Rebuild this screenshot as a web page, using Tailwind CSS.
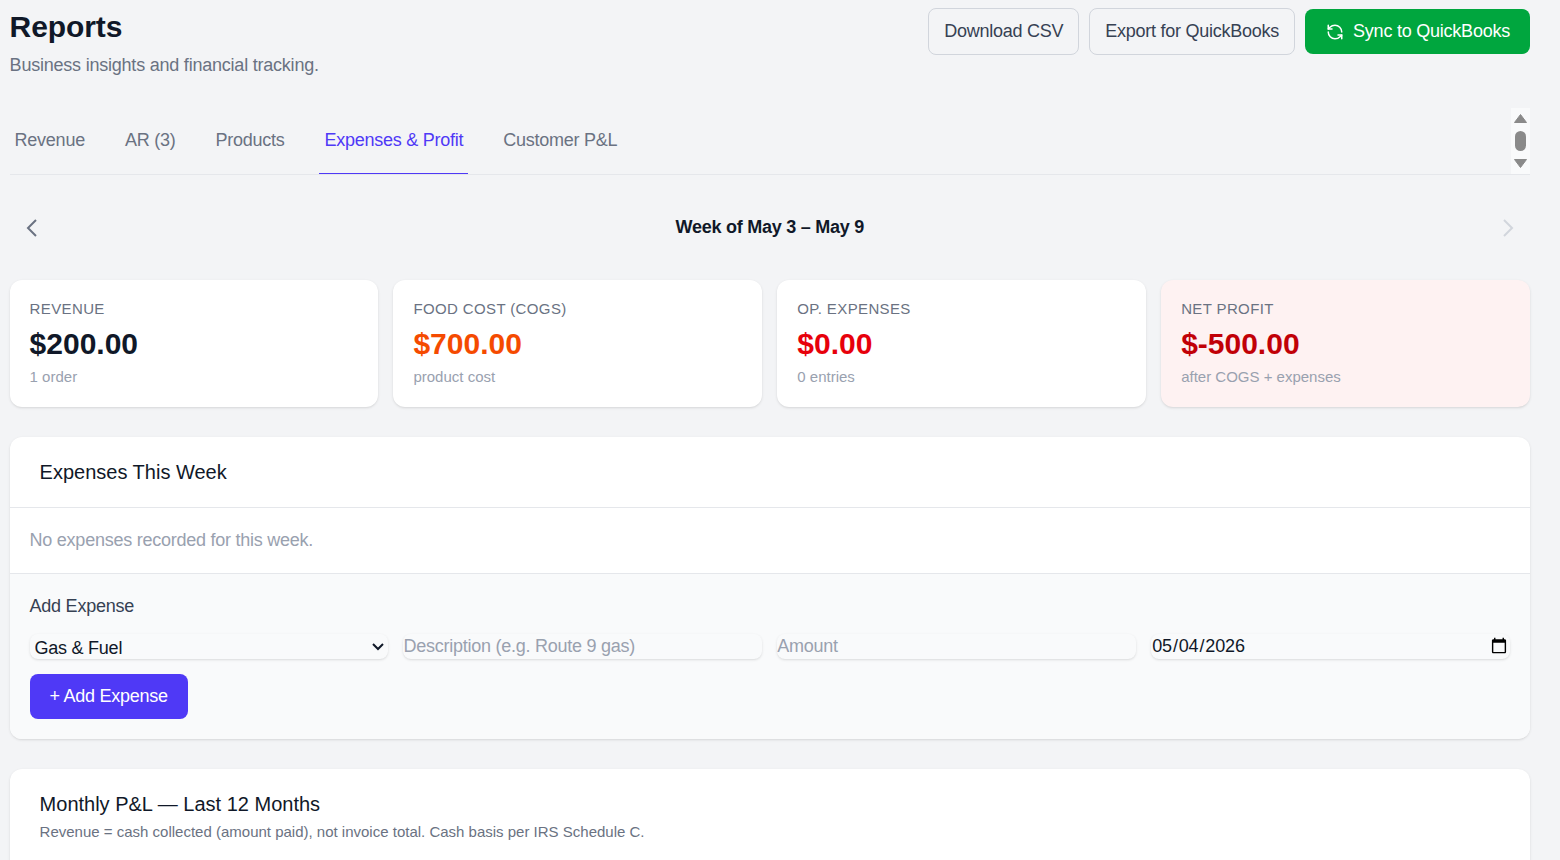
<!DOCTYPE html>
<html lang="en"><head><meta charset="utf-8"><title>Reports</title>
<script src="https://cdn.jsdelivr.net/npm/@tailwindcss/browser@4"></script></head>
<body class="bg-gray-100 overflow-hidden font-['Liberation_Sans',sans-serif]">
<div class="h-[860px] overflow-hidden pl-[9.6px] pr-[30px] pt-[8px]">
  <header class="flex justify-between h-[100px]">
    <div>
      <h1 class="text-[30px] leading-[38px] font-bold text-gray-900 tracking-[-0.1px]">Reports</h1>
      <p class="text-lg leading-[28px] mt-[5px] text-gray-500 tracking-[-0.22px]">Business insights and financial tracking.</p>
    </div>
    <div class="flex items-start gap-[10px] tracking-[-0.25px]">
      <button class="h-[47px] px-[15px] pb-[2px] rounded-lg border border-gray-300 text-lg text-gray-700">Download CSV</button>
      <button class="h-[47px] px-[15px] pb-[2px] rounded-lg border border-gray-300 text-lg text-gray-700">Export for QuickBooks</button>
      <button class="h-[45px] mt-px pl-[21px] pr-[20px] pb-[1px] rounded-lg bg-green-600 text-white text-lg font-medium flex items-center gap-[9px] tracking-[-0.23px]">
        <svg class="w-[18px] h-[18px] mt-[1px]" viewBox="0 0 24 24" fill="none" stroke="currentColor" stroke-width="2" stroke-linecap="round" stroke-linejoin="round"><path d="M21 12a9 9 0 0 0-9-9 9.75 9.75 0 0 0-6.74 2.74L3 8"/><path d="M3 3v5h5"/><path d="M3 12a9 9 0 0 0 9 9 9.75 9.75 0 0 0 6.74-2.74L21 16"/><path d="M16 16h5v5"/></svg>
        Sync to QuickBooks</button>
    </div>
  </header>
  <nav class="flex justify-between h-[67px] border-b border-gray-200">
    <div class="flex gap-[30px] text-lg text-gray-500 tracking-[-0.25px]">
      <a class="px-[5px] pb-[2px] h-[66px] flex items-center">Revenue</a>
      <a class="px-[5px] pb-[2px] h-[66px] flex items-center">AR (3)</a>
      <a class="px-[5px] pb-[2px] h-[66px] flex items-center">Products</a>
      <a class="px-[5px] pb-[1px] h-[66px] flex items-center text-indigo-600 border-b border-indigo-600">Expenses &amp; Profit</a>
      <a class="px-[5px] pb-[2px] h-[66px] flex items-center">Customer P&amp;L</a>
    </div>
    <div class="w-[19px] h-[66px] bg-gray-50 flex flex-col items-center pt-[6px]">
      <svg class="w-[13px] h-[9px]" viewBox="0 0 13 9"><path d="M6.5 0.5 L12.5 8.5 H0.5 Z" fill="#8a8a8a" stroke="#8a8a8a" stroke-linejoin="round"/></svg>
      <div class="w-[11px] h-[20px] mt-[8px] rounded-full bg-[#8a8a8a]"></div>
      <svg class="w-[13px] h-[9px] mt-[8px]" viewBox="0 0 13 9"><path d="M0.5 0.5 H12.5 L6.5 8.5 Z" fill="#8a8a8a" stroke="#8a8a8a" stroke-linejoin="round"/></svg>
    </div>
  </nav>
  <div class="flex items-center justify-between h-[105px] px-[15px]">
    <svg class="w-[14px] h-[20px] text-gray-500" viewBox="0 0 14 20" fill="none" stroke="currentColor" stroke-width="2"><path d="M11 2 L3 10 L11 18"/></svg>
    <div class="text-lg font-semibold text-gray-900 tracking-[-0.25px] pb-[1px]">Week of May 3 – May 9</div>
    <svg class="w-[14px] h-[20px] text-gray-300" viewBox="0 0 14 20" fill="none" stroke="currentColor" stroke-width="2"><path d="M3 2 L11 10 L3 18"/></svg>
  </div>
  <section class="grid grid-cols-4 gap-[15px]">
    <div class="h-[127px] bg-white rounded-xl shadow-sm px-[20px] pt-[19px]">
      <div class="text-[15px] leading-[20px] tracking-wide text-gray-500">REVENUE</div>
      <div class="text-[30px] leading-[40px] mt-[5px] font-bold text-gray-900">$200.00</div>
      <div class="text-[15px] leading-[20px] mt-[3px] text-gray-400">1 order</div>
    </div>
    <div class="h-[127px] bg-white rounded-xl shadow-sm px-[20px] pt-[19px]">
      <div class="text-[15px] leading-[20px] tracking-wide text-gray-500">FOOD COST (COGS)</div>
      <div class="text-[30px] leading-[40px] mt-[5px] font-bold text-orange-600">$700.00</div>
      <div class="text-[15px] leading-[20px] mt-[3px] text-gray-400">product cost</div>
    </div>
    <div class="h-[127px] bg-white rounded-xl shadow-sm px-[20px] pt-[19px]">
      <div class="text-[15px] leading-[20px] tracking-wide text-gray-500">OP. EXPENSES</div>
      <div class="text-[30px] leading-[40px] mt-[5px] font-bold text-red-600">$0.00</div>
      <div class="text-[15px] leading-[20px] mt-[3px] text-gray-400">0 entries</div>
    </div>
    <div class="h-[127px] bg-red-50 rounded-xl shadow-sm px-[20px] pt-[19px]">
      <div class="text-[15px] leading-[20px] tracking-wide text-gray-500">NET PROFIT</div>
      <div class="text-[30px] leading-[40px] mt-[5px] font-bold text-red-700">$-500.00</div>
      <div class="text-[15px] leading-[20px] mt-[3px] text-gray-400">after COGS + expenses</div>
    </div>
  </section>
  <section class="mt-[30px] bg-white rounded-xl shadow-sm overflow-hidden">
    <div class="h-[71px] flex items-center px-[30px] border-b border-gray-200 text-xl text-gray-900">Expenses This Week</div>
    <div class="h-[65px] pb-[1px] flex items-center px-[20px] text-lg text-gray-400 tracking-[-0.25px]">No expenses recorded for this week.</div>
    <div class="h-[166px] bg-gray-50 border-t border-gray-200 px-[20px] pt-[20px]">
      <div class="text-lg leading-[24px] text-gray-700 tracking-[-0.25px]">Add Expense</div>
      <div class="grid grid-cols-4 gap-[15px] mt-[16px] h-[25px] tracking-[-0.25px]">
        <div class="relative h-[25px]">
          <select class="appearance-none rounded-lg shadow-sm text-lg text-gray-900 h-[25px] w-full pl-[5px] pr-[24px] pb-[1px]"><option>Gas &amp; Fuel</option></select>
          <svg class="absolute right-[4px] top-[9px] w-[12px] h-[8px] text-gray-900 pointer-events-none" viewBox="0 0 12 8" fill="none" stroke="currentColor" stroke-width="2"><path d="M1 1 L6 6 L11 1"/></svg>
        </div>
        <input class="rounded-lg shadow-sm text-lg h-[25px] pb-[2px] w-full px-0 placeholder:text-gray-400" placeholder="Description (e.g. Route 9 gas)">
        <input class="rounded-lg shadow-sm text-lg h-[25px] pb-[2px] w-full px-0 placeholder:text-gray-400" placeholder="Amount">
        <input type="date" value="2026-05-04" class="rounded-lg shadow-sm text-lg h-[25px] pb-[2px] w-full px-0 text-gray-900 tracking-[-0.15px]">
      </div>
      <button class="mt-[15px] h-[45px] w-[158px] pb-[2px] rounded-lg bg-indigo-600 text-white text-lg font-medium tracking-[-0.25px]">+ Add Expense</button>
    </div>
  </section>
  <section class="mt-[30px] bg-white rounded-xl shadow-sm h-[200px] px-[30px] pt-[21px]">
    <div class="text-xl leading-[28px] text-gray-900">Monthly P&amp;L — Last 12 Months</div>
    <div class="text-[15px] leading-[20px] mt-[4px] text-gray-500">Revenue = cash collected (amount paid), not invoice total. Cash basis per IRS Schedule C.</div>
  </section>
</div>
</body></html>
